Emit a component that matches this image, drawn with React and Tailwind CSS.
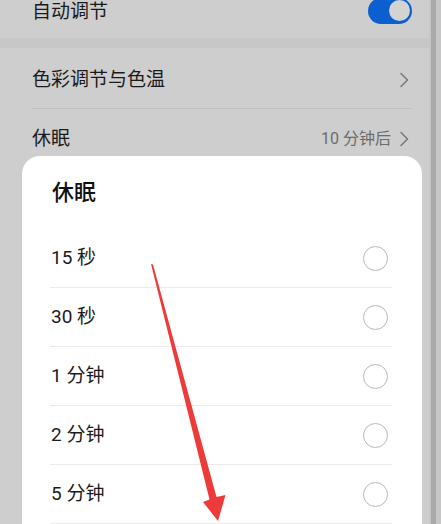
import React from "react"

const options = ["15 秒", "30 秒", "1 分钟", "2 分钟", "5 分钟"]

function Chevron() {
  return (
    <svg width="10" height="16" viewBox="0 0 10 16" className="shrink-0">
      <polyline points="2,1.5 8.5,8 2,14.5" fill="none" stroke="#7b7b7b" strokeWidth="1.6" strokeLinecap="round" strokeLinejoin="round" />
    </svg>
  )
}

function Radio() {
  return <div className="w-[25px] h-[25px] rounded-full border-[1.5px] border-[#b9b9b9] shrink-0" />
}

export default function App() {
  return (
    <div
      className="relative w-[441px] h-[524px] overflow-hidden bg-[#cecece] flex"
      style={{ fontFamily: '"Roboto", "Noto Sans CJK SC", sans-serif' }}
    >
      {/* settings list under the dim */}
      <div className="flex-1 flex flex-col">
        <div className="flex items-center justify-between pl-[32px] pr-[17px] h-[24px]">
          <span className="text-[19px] leading-[24px] text-[#1a1a1a]">自动调节</span>
          <div className="relative w-[44px] h-[26px] -mt-[3px] rounded-full bg-[#0b5fcf]">
            <div className="absolute right-[2px] top-[2px] w-[21px] h-[21px] rounded-full bg-[#d3d3d3]" />
          </div>
        </div>
        <div className="mt-[14px] h-[10px] bg-[#c7c7c7]" />
        <div className="flex items-center justify-between pl-[32px] pr-[20px] h-[60px] pt-[4px]">
          <span className="text-[19px] leading-[24px] text-[#1a1a1a]">色彩调节与色温</span>
          <Chevron />
        </div>
        <div className="ml-[32px] mr-[17px] h-px bg-[#c0c0c0]" />
        <div className="flex items-center justify-between pl-[32px] pr-[20px] h-[60px]">
          <span className="text-[19px] leading-[24px] text-[#1a1a1a]">休眠</span>
          <div className="flex items-center gap-[8px]">
            <span className="text-[16px] text-[#6c6c6c]">10 分钟后</span>
            <Chevron />
          </div>
        </div>
      </div>

      {/* right edge */}
      <div className="w-[12px] flex">
        <div className="w-[2px] bg-[#c6c6c6]" />
        <div className="w-[5px] bg-[#a9a9a9]" />
        <div className="flex-1 bg-[#c6c6c6]" />
      </div>

      {/* dialog */}
      <div className="absolute left-[22px] top-[156px] w-[400px] h-[420px] bg-white rounded-[18px]">
        <div className="pl-[30px] pt-[23px] text-[22px] leading-[28px] font-medium text-[#111]">休眠</div>
        <div className="mt-[22px] ml-[28px] mr-[30px]">
          {options.map((o) => (
            <div key={o} className="flex items-center justify-between h-[59px] border-b border-[#ebebeb] pl-[1px] pr-[4px]">
              <span className="text-[19px] text-[#1c1c1c]">{o}</span>
              <Radio />
            </div>
          ))}
          <div className="-mx-[10px] h-[40px] bg-[#fdf3ea]" />
        </div>
      </div>

      {/* red arrow annotation */}
      <svg className="absolute inset-0 pointer-events-none" width="441" height="524" viewBox="0 0 441 524">
        <polygon
          points="151,264 153,264.5 216.5,497 225.5,495 218,521 203,502 209.5,499.5"
          fill="#ef3a3a"
        />
      </svg>
    </div>
  )
}
